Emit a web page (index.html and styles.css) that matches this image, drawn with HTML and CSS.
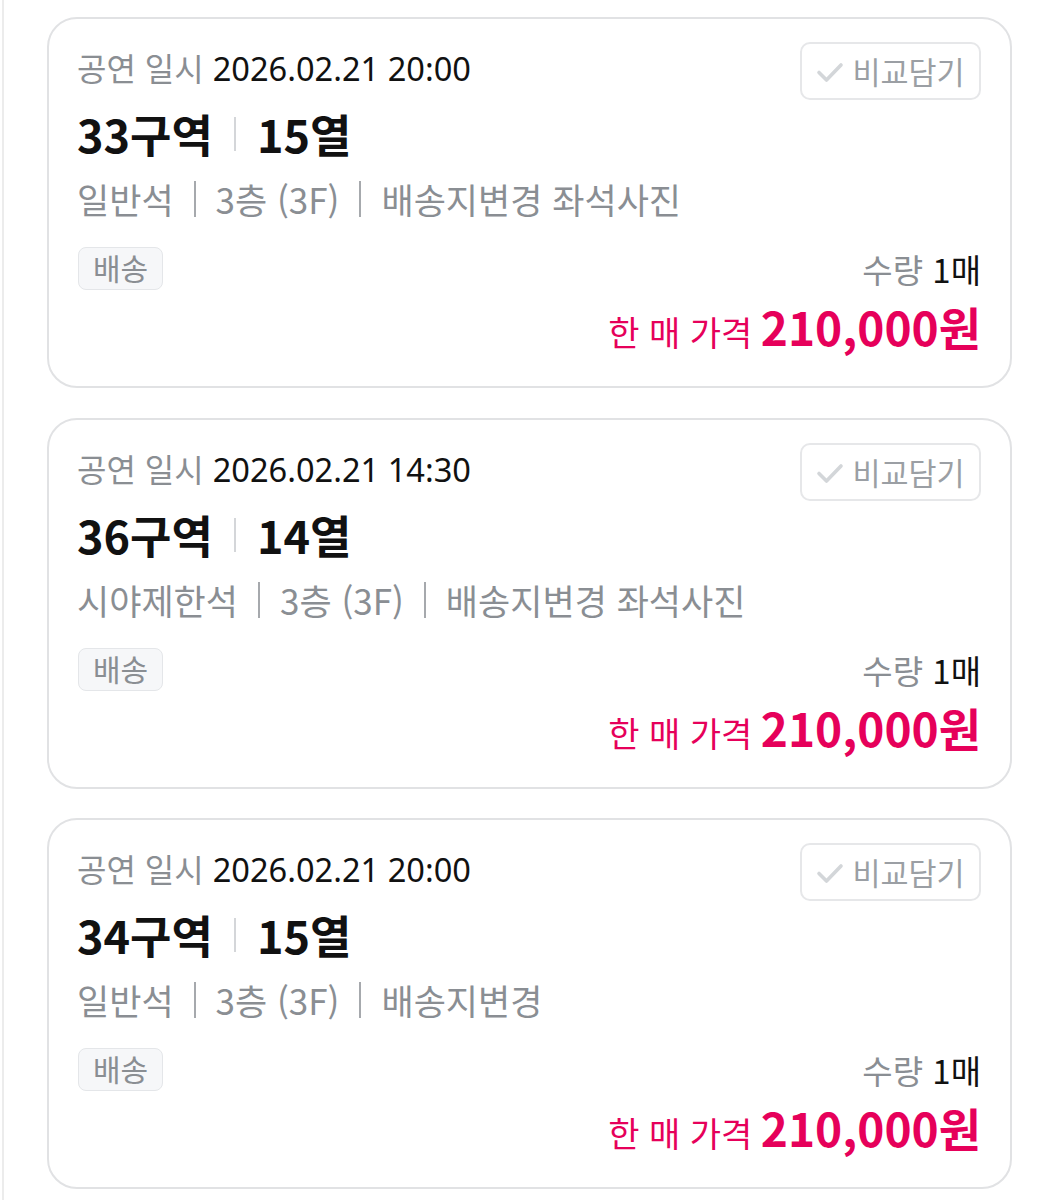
FILE: index.html
```html
<!DOCTYPE html>
<html lang="ko">
<head>
<meta charset="utf-8">
<link rel="stylesheet" href="styles.css">
</head>
<body>
<div class="page">
  <div class="card">
    <div class="top">
      <div class="info">
        <div class="date"><span class="label">공연 일시</span> <span class="value">2026.02.21 20:00</span></div>
        <div class="seat"><span>33구역</span><i class="sep light"></i><span>15열</span></div>
        <div class="meta"><span>일반석</span><i class="sep"></i><span>3층 (3F)</span><i class="sep"></i><span>배송지변경 좌석사진</span></div>
      </div>
      <button class="compare"><svg class="check" viewBox="0 0 28 22" width="28" height="22"><path d="M3 11.5 L10.5 19 L25 4" fill="none" stroke="currentColor" stroke-width="3.6" stroke-linecap="round" stroke-linejoin="round"/></svg>비교담기</button>
    </div>
    <div class="bottom">
      <span class="badge">배송</span>
      <div class="price-box">
        <div class="qty"><span class="label">수량</span> <span class="value">1매</span></div>
        <div class="price"><span class="plabel">한 매 가격</span> <span class="amount">210,000원</span></div>
      </div>
    </div>
  </div>

  <div class="card">
    <div class="top">
      <div class="info">
        <div class="date"><span class="label">공연 일시</span> <span class="value">2026.02.21 14:30</span></div>
        <div class="seat"><span>36구역</span><i class="sep light"></i><span>14열</span></div>
        <div class="meta"><span>시야제한석</span><i class="sep"></i><span>3층 (3F)</span><i class="sep"></i><span>배송지변경 좌석사진</span></div>
      </div>
      <button class="compare"><svg class="check" viewBox="0 0 28 22" width="28" height="22"><path d="M3 11.5 L10.5 19 L25 4" fill="none" stroke="currentColor" stroke-width="3.6" stroke-linecap="round" stroke-linejoin="round"/></svg>비교담기</button>
    </div>
    <div class="bottom">
      <span class="badge">배송</span>
      <div class="price-box">
        <div class="qty"><span class="label">수량</span> <span class="value">1매</span></div>
        <div class="price"><span class="plabel">한 매 가격</span> <span class="amount">210,000원</span></div>
      </div>
    </div>
  </div>

  <div class="card">
    <div class="top">
      <div class="info">
        <div class="date"><span class="label">공연 일시</span> <span class="value">2026.02.21 20:00</span></div>
        <div class="seat"><span>34구역</span><i class="sep light"></i><span>15열</span></div>
        <div class="meta"><span>일반석</span><i class="sep"></i><span>3층 (3F)</span><i class="sep"></i><span>배송지변경</span></div>
      </div>
      <button class="compare"><svg class="check" viewBox="0 0 28 22" width="28" height="22"><path d="M3 11.5 L10.5 19 L25 4" fill="none" stroke="currentColor" stroke-width="3.6" stroke-linecap="round" stroke-linejoin="round"/></svg>비교담기</button>
    </div>
    <div class="bottom">
      <span class="badge">배송</span>
      <div class="price-box">
        <div class="qty"><span class="label">수량</span> <span class="value">1매</span></div>
        <div class="price"><span class="plabel">한 매 가격</span> <span class="amount">210,000원</span></div>
      </div>
    </div>
  </div>
</div>
</body>
</html>
```

FILE: styles.css
```css
html, body {
  margin: 0;
  padding: 0;
  background: #fff;
}
body {
  font-family: "Noto Sans CJK KR", "Noto Sans", sans-serif;
  color: #111;
}
.page {
  margin-left: 2px;
  border-left: 2px solid #ececec;
  min-height: 1200px;
  padding: 17px 44px 0 43px;
  display: flex;
  flex-direction: column;
  gap: 29.5px;
}
.card {
  box-sizing: border-box;
  height: 371px;
  border: 2px solid #e1e2e4;
  border-radius: 30px;
  padding: 22px 28px 0 28px;
}
.top {
  display: flex;
  justify-content: space-between;
  align-items: flex-start;
}
.date {
  font-size: 32px;
  line-height: 52px;
  white-space: nowrap;
}
.date .label { color: #8a8e93; }
.date .value {
  color: #111;
  font-family: "Noto Sans", "Noto Sans CJK KR", sans-serif;
  font-size: 32.6px;
}
.seat {
  font-size: 45px;
  font-weight: 700;
  line-height: 78px;
  display: flex;
  align-items: center;
  gap: 21px;
}
.meta {
  font-size: 35px;
  line-height: 52px;
  color: #8a8e93;
  display: flex;
  align-items: center;
  gap: 20px;
}
.sep {
  display: inline-block;
  width: 2px;
  height: 36px;
  background: #a6a9ad;
}
.sep.light {
  height: 34px;
  background: #d4d6d9;
}
.compare {
  box-sizing: border-box;
  width: 181px;
  height: 58px;
  margin-top: 1px;
  margin-right: 1px;
  border: 2px solid #e6e7e9;
  border-radius: 10px;
  background: #fff;
  font-family: inherit;
  font-size: 30.5px;
  color: #9b9fa4;
  display: flex;
  align-items: center;
  justify-content: center;
  gap: 8px;
  padding: 0;
}
.check {
  color: #d3d6d9;
  margin-top: 2px;
}
.bottom {
  margin-top: 22px;
  display: flex;
  justify-content: space-between;
  align-items: flex-start;
}
.badge {
  box-sizing: border-box;
  height: 43px;
  padding: 0 14px;
  margin-left: 1px;
  border: 1.5px solid #e4e6e9;
  border-radius: 8px;
  background: #f6f7f9;
  color: #8a8e93;
  font-size: 30px;
  line-height: 39px;
}
.price-box {
  text-align: right;
  margin-right: 1px;
}
.qty {
  font-size: 33px;
  line-height: 44px;
}
.qty .label { color: #8a8e93; }
.qty .value { color: #111; }
.price {
  color: #e6005a;
  line-height: 70px;
  white-space: nowrap;
}
.plabel {
  font-size: 34px;
  margin-right: 4px;
}
.amount {
  font-size: 46px;
  font-weight: 700;
}
```
